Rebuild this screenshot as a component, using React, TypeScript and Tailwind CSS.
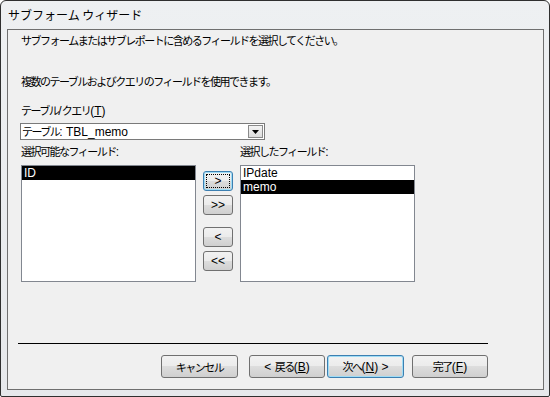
import { ReactElement } from "react";

const jp = "font-['Noto_Sans_CJK_JP',sans-serif] text-[11px] tracking-[-1.5px] leading-[14px] text-black";
const en = "font-['Liberation_Sans',sans-serif] text-[12px] tracking-normal";
const btn =
  "flex items-center justify-center rounded-[3px] border bg-[linear-gradient(#f2f2f2,#ebebeb_50%,#dddddd_50%,#cfcfcf)]";

const ArrowButton = ({ label, focused }: { label: string; focused?: boolean }): ReactElement => (
  <div
    className={`${btn} h-[20px] w-[30px] ${
      focused ? "border-[#3c7fb1] shadow-[inset_0_0_0_1px_#9fdcf5]" : "border-[#707070]"
    }`}
  >
    <div
      className={`flex h-[14px] w-[24px] items-center justify-center ${
        focused ? "border border-dotted border-black" : ""
      }`}
    >
      <span className={`${en} leading-[12px] text-black`}>{label}</span>
    </div>
  </div>
);

const DialogButton = ({
  children,
  width,
  isDefault,
}: {
  children: React.ReactNode;
  width: string;
  isDefault?: boolean;
}): ReactElement => (
  <div
    className={`${btn} h-[23px] ${width} ${
      isDefault ? "border-[#3c7fb1] shadow-[inset_0_0_0_1px_#9fdcf5]" : "border-[#707070]"
    }`}
  >
    <span className={jp}>{children}</span>
  </div>
);

const App = (): ReactElement => {
  return (
    <div className="flex h-[397px] w-[550px] flex-col rounded-t-[6px] rounded-b-[2px] border border-[#2f2f2f] bg-[linear-gradient(#eef0f2,#e6e8eb)]">
      {/* Title bar */}
      <div className="flex h-[28px] items-center pl-[7px]">
        <span className="font-['Noto_Sans_CJK_JP',sans-serif] text-[12px] text-black">
          サブフォーム ウィザード
        </span>
      </div>

      {/* Client area */}
      <div className="ml-[6px] flex h-[361px] w-[537px] flex-col border border-[#6f6f6f] bg-[#f0f0f0] pl-[13px]">
        <p className={`${jp} mt-[3px]`}>
          サブフォームまたはサブレポートに含めるフィールドを選択してください。
        </p>
        <p className={`${jp} mt-[27px]`}>
          複数のテーブルおよびクエリのフィールドを使用できます。
        </p>

        <p className={`${jp} mt-[15px]`}>
          テーブル<span className={en}>/</span>クエリ
          <span className={en}>
            (<span className="underline">T</span>)
          </span>
        </p>

        {/* Combo box */}
        <div className="ml-[-1px] mt-[5px] flex h-[17px] w-[245px] items-center justify-between border border-[#7a7a7a] bg-white pl-[1px] pr-[1px]">
          <span className={jp}>
            テーブル<span className={en}>: TBL_memo</span>
          </span>
          <div className="flex h-[13px] w-[15px] items-center justify-center border border-[#8a8a8a] bg-[linear-gradient(#f4f4f4,#dcdcdc)]">
            <svg width="7" height="4" viewBox="0 0 7 4">
              <path d="M0 0h7L3.5 4z" fill="#000" />
            </svg>
          </div>
        </div>

        {/* Field labels */}
        <div className="mt-[4px] flex">
          <p className={`${jp} w-[219px]`}>
            選択可能なフィールド<span className={en}>:</span>
          </p>
          <p className={jp}>
            選択したフィールド<span className={en}>:</span>
          </p>
        </div>

        {/* Lists + move buttons */}
        <div className="mt-[6px] flex">
          <div className="h-[117px] w-[175px] border border-[#828790] bg-white">
            <div className={`${en} h-[14px] bg-black pl-[2px] leading-[14px] text-white`}>ID</div>
          </div>

          <div className="mx-[7px] flex w-[30px] flex-col">
            <div className="mt-[6px]">
              <ArrowButton label=">" focused />
            </div>
            <div className="mt-[4px]">
              <ArrowButton label=">>" />
            </div>
            <div className="mt-[12px]">
              <ArrowButton label="<" />
            </div>
            <div className="mt-[4px]">
              <ArrowButton label="<<" />
            </div>
          </div>

          <div className="h-[117px] w-[175px] border border-[#828790] bg-white">
            <div className={`${en} h-[14px] pl-[2px] leading-[14px] text-black`}>IPdate</div>
            <div className={`${en} h-[14px] bg-black pl-[2px] leading-[14px] text-white`}>memo</div>
          </div>
        </div>

        {/* Separator */}
        <div className="ml-[-3px] mt-[61px] h-px w-[470px] bg-black" />

        {/* Dialog buttons */}
        <div className="ml-[-3px] mt-[11px] flex w-[470px] justify-end">
          <DialogButton width="w-[77px]">キャンセル</DialogButton>
          <div className="ml-[11px]">
            <DialogButton width="w-[76px]">
              <span className={en}>&lt; </span>戻る
              <span className={en}>
                (<span className="underline">B</span>)
              </span>
            </DialogButton>
          </div>
          <div className="ml-[2px]">
            <DialogButton width="w-[77px]" isDefault>
              次へ
              <span className={en}>
                (<span className="underline">N</span>) &gt;
              </span>
            </DialogButton>
          </div>
          <div className="ml-[8px]">
            <DialogButton width="w-[76px]">
              完了
              <span className={en}>
                (<span className="underline">F</span>)
              </span>
            </DialogButton>
          </div>
        </div>
      </div>
    </div>
  );
};

export default App;
